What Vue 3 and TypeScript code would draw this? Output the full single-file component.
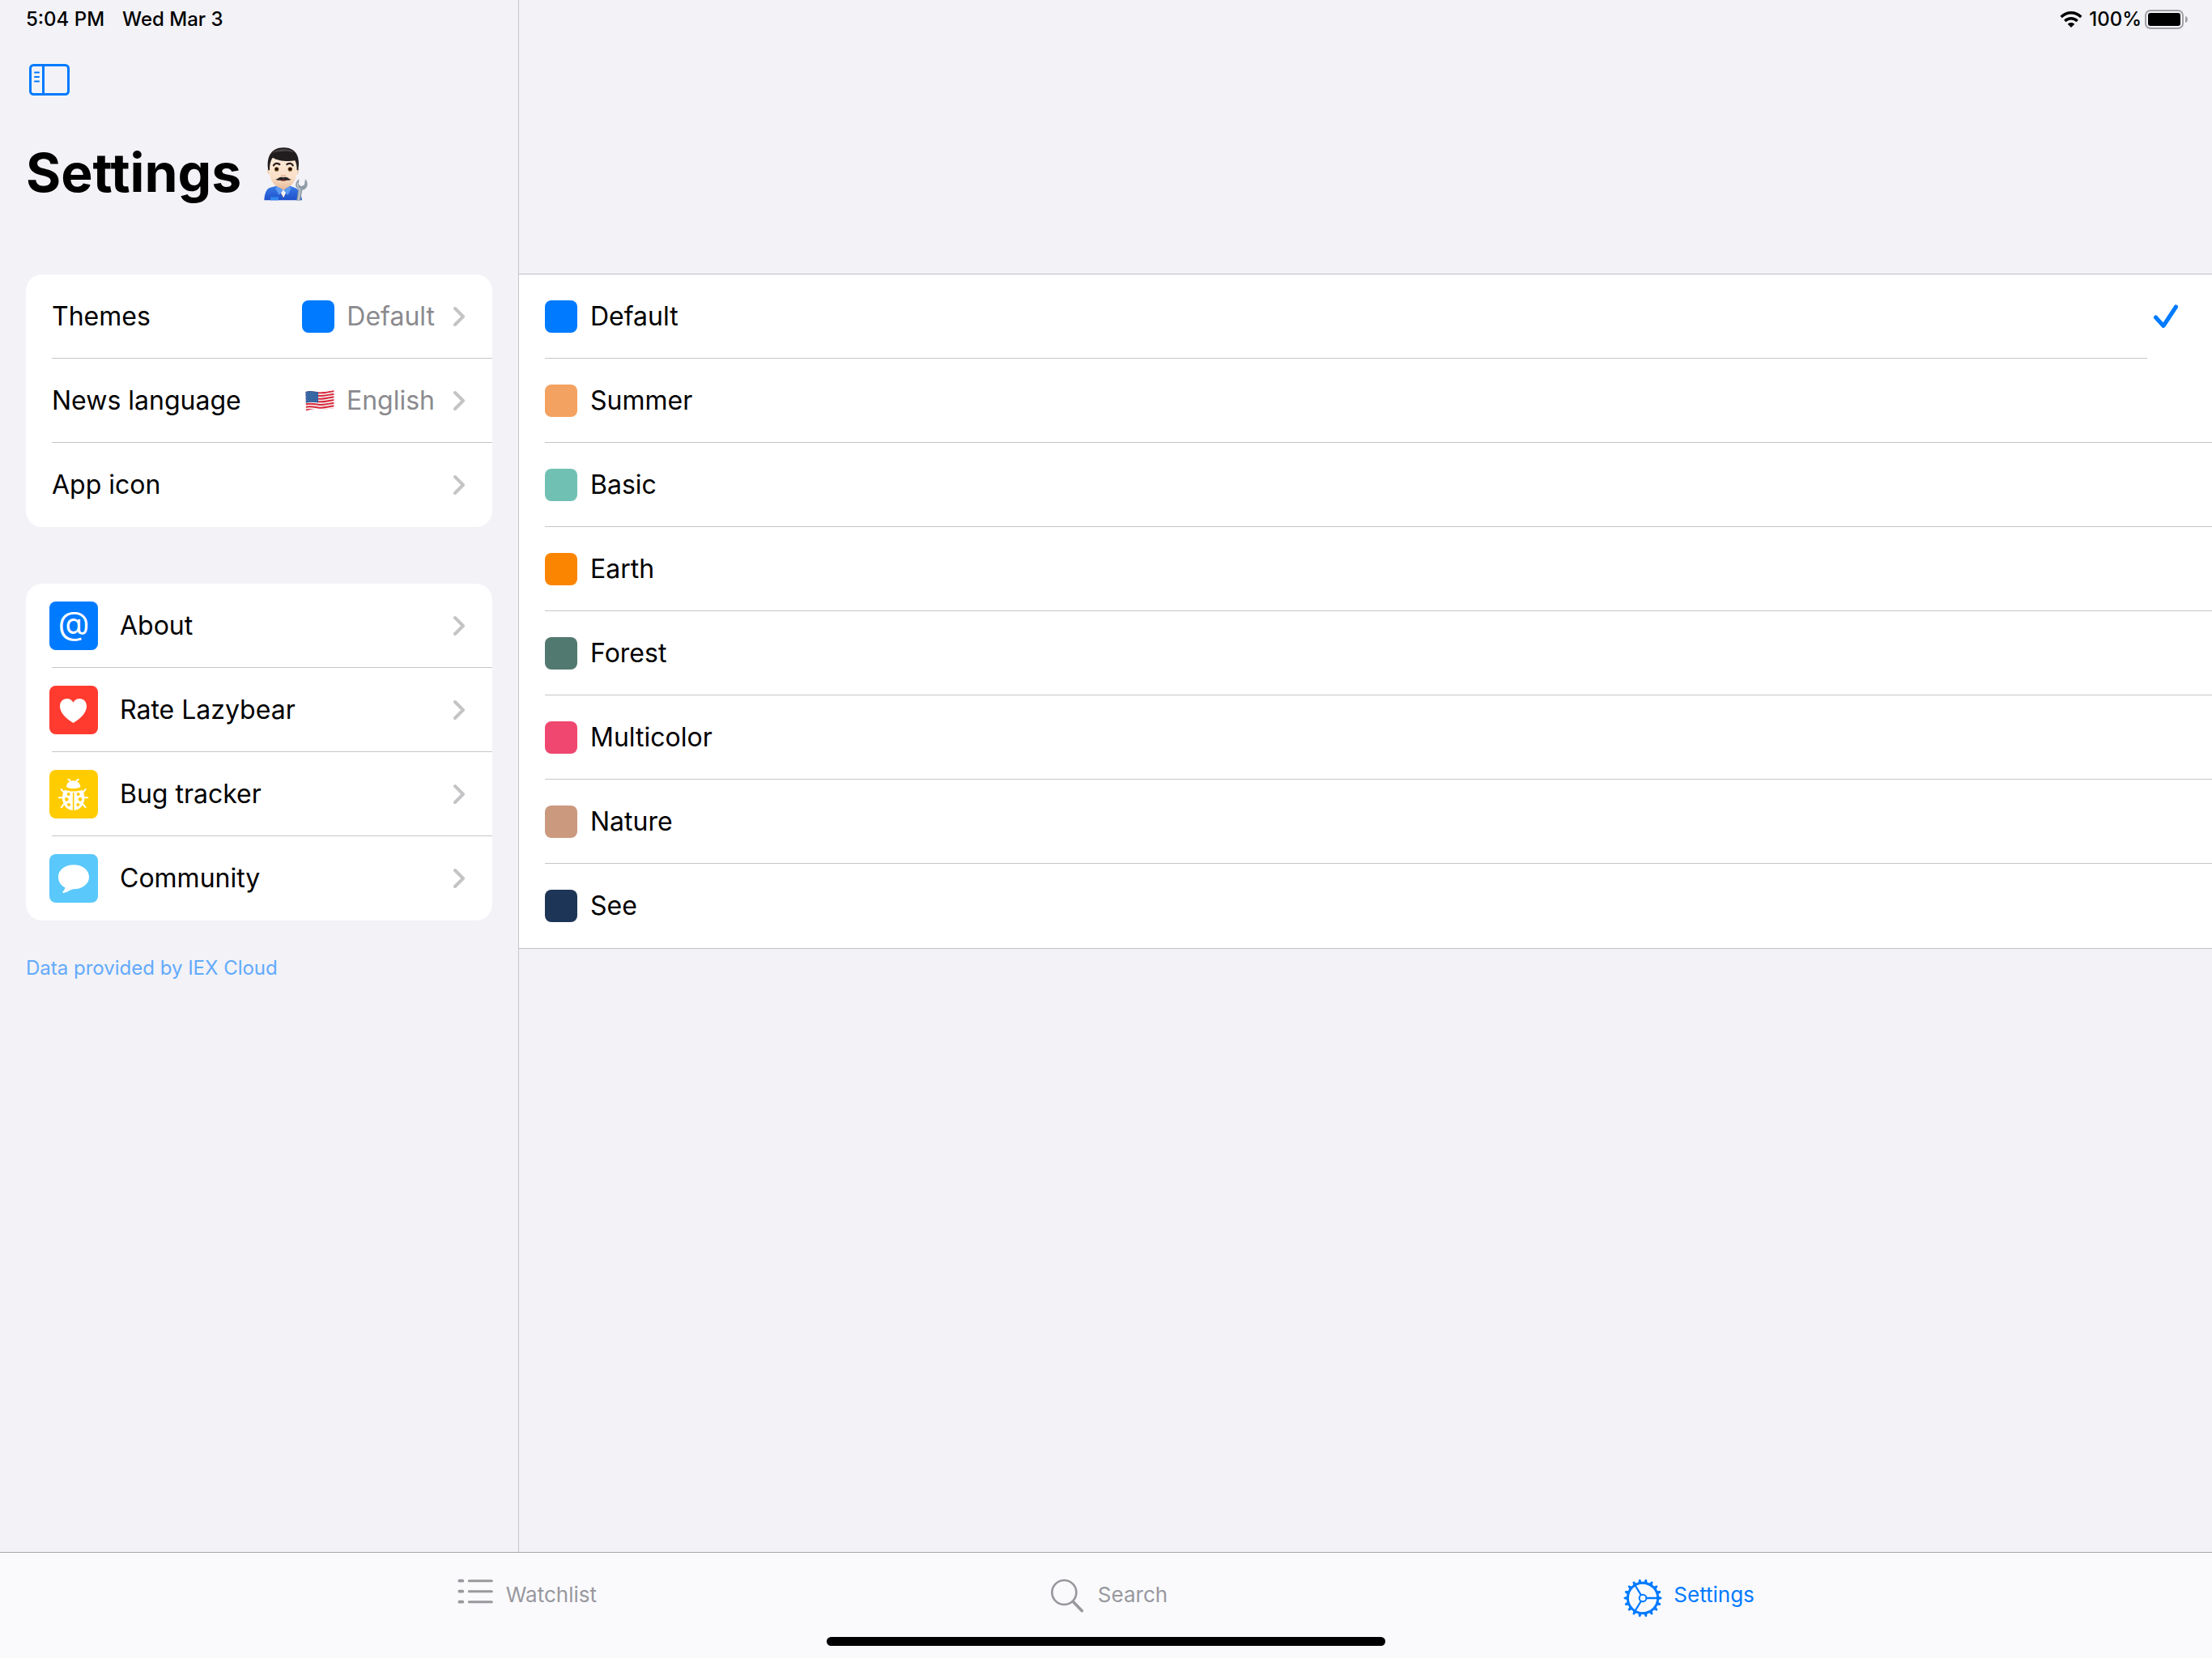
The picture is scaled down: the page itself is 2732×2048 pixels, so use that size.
<script setup lang="ts">
import { ref } from 'vue'

interface Theme {
  name: string
  color: string
}

interface LinkRow {
  label: string
  color: string
  icon: 'at' | 'heart' | 'bug' | 'bubble'
}

const themes: Theme[] = [
  { name: 'Default', color: '#007aff' },
  { name: 'Summer', color: '#f4a261' },
  { name: 'Basic', color: '#70c1b3' },
  { name: 'Earth', color: '#fb8500' },
  { name: 'Forest', color: '#52796f' },
  { name: 'Multicolor', color: '#ef476f' },
  { name: 'Nature', color: '#cb997e' },
  { name: 'See', color: '#1d3557' },
]

const links: LinkRow[] = [
  { label: 'About', color: '#007aff', icon: 'at' },
  { label: 'Rate Lazybear', color: '#ff3b30', icon: 'heart' },
  { label: 'Bug tracker', color: '#ffcc00', icon: 'bug' },
  { label: 'Community', color: '#5ac8fa', icon: 'bubble' },
]

const selected = ref('Default')
const gearTeeth = Array.from({ length: 18 }, (_, i) => i * 20)
</script>

<template>
  <div class="app">
    <div class="split">
      <aside class="sidebar">
        <div class="status">
          <span>5:04 PM</span>
          <span>Wed Mar 3</span>
        </div>

        <div class="toolbar">
          <button class="toggle" type="button" aria-label="Toggle sidebar">
            <svg width="50" height="40" viewBox="0 0 50 40" fill="none" stroke="#007aff">
              <rect x="1.5" y="1.5" width="47" height="36" rx="4" stroke-width="3" />
              <path d="M17.5 2v35" stroke-width="3" />
              <path d="M7 10.500h5M7 16h5M7 21.500h5" stroke-width="2" stroke-linecap="round" />
            </svg>
          </button>
        </div>

        <h1 class="title">
          Settings
          <svg class="mechanic" width="54" height="66" viewBox="80 65 162 198" role="img" aria-label="Mechanic">
            <defs>
              <linearGradient id="skin" x1="0" y1="0" x2="0" y2="1">
                <stop offset="0" stop-color="#fdeedd" />
                <stop offset="0.7" stop-color="#fae0c8" />
                <stop offset="1" stop-color="#e9bd9c" />
              </linearGradient>
              <linearGradient id="shirt" x1="0" y1="0" x2="0" y2="1">
                <stop offset="0" stop-color="#3a7de8" />
                <stop offset="1" stop-color="#1d4fcb" />
              </linearGradient>
            </defs>
            <path d="M81 261c1-24 7-42 22-47l28-7h42l22 8c13 5 23 20 26 46z" fill="url(#shirt)" />
            <path d="M133 200h36v18l-17 34-19-34z" fill="#e3b18e" />
            <path d="M136 218l15 6 17-6-15 32z" fill="#f2f5f8" />
            <path d="M131 208l-9 9 14 25 15-18zM172 208l9 9-13 25-15-18z" fill="#5b9bf2" />
            <path d="M104 249h30v12h-30z" fill="#3187ee" />
            <path d="M96 143c-5 4-3 20 4 24zM206 143c5 4 3 20-4 24z" fill="#efc7a4" />
            <path d="M97 125c0-28 20-46 54-46s54 18 54 46c0 40-8 88-54 92-46-4-54-52-54-92z" fill="url(#skin)" />
            <path d="M96 150c-8-46 8-84 57-84 48 0 62 36 54 84l-5 0c0-16-2-26-7-36-30 4-65 1-82-11-9 10-12 28-12 47z" fill="#211d1e" />
            <path d="M110 86c15-17 65-20 83-2-20-7-58-6-83 2z" fill="#4b4647" />
            <path d="M116 132c4-9 14-9 22-4M187 132c-4-9-14-9-22-4" fill="none" stroke="#2c2020" stroke-width="7" stroke-linecap="round" />
            <ellipse cx="127" cy="146" rx="10" ry="10" fill="#fff" />
            <ellipse cx="177" cy="146" rx="10" ry="10" fill="#fff" />
            <circle cx="127" cy="146" r="8.500" fill="#7c4a10" />
            <circle cx="177" cy="146" r="8.500" fill="#7c4a10" />
            <circle cx="127" cy="145" r="5" fill="#120a06" />
            <circle cx="177" cy="145" r="5" fill="#120a06" />
            <path d="M144 168q8 6 16 0" fill="none" stroke="#dba27e" stroke-width="4" />
            <path d="M138 184h28q-4 6-14 6t-14-6z" fill="#7a2f24" />
            <path d="M123 184c7-1 12-9 22-9 4 0 5 2 7 2s3-2 7-2c10 0 15 8 22 9-7 4-20 4-29 0-9 4-22 4-29 0z" fill="#2a2325" />
            <path d="M201 262l6-42c-9-5-13-17-6-28l9-10-1 20 9 8 12-6 3-21c10 9 11 27 1 35-4 4-8 5-12 5l-7 39z" fill="#8f9ba5" />
            <path d="M208 262l6-42c-8-4-12-14-8-24" fill="none" stroke="#c8d2d8" stroke-width="4" />
          </svg>
        </h1>

        <nav class="card" aria-label="Preferences">
          <button class="row" type="button">
            <span class="label">Themes</span>
            <span class="value">
              <span class="swatch swatch-current"></span>
              Default
            </span>
            <svg class="chevron" width="14" height="26" viewBox="0 0 14 26"><path d="M2 3l10 10L2 23" /></svg>
          </button>
          <button class="row" type="button">
            <span class="label">News language</span>
            <span class="value">
              <svg class="flag" width="36" height="26" viewBox="0 0 108 78" role="img" aria-label="United States">
                <defs>
                  <clipPath id="wave">
                    <path d="M1 6C20 0 38 6 54 7S88 2 107 0v66c-19 3-34 6-53 4S20 70 3 77z" />
                  </clipPath>
                </defs>
                <g clip-path="url(#wave)">
                  <path d="M0 0h108v78H0z" fill="#f6f3f4" />
                  <g fill="none" stroke="#d8283b" stroke-width="6">
                    <path d="M0 8C20 2 38 9 54 10S88 5 108 3" />
                    <path d="M0 19C20 13 38 20 54 21S88 16 108 14" />
                    <path d="M0 30C20 24 38 31 54 32S88 27 108 25" />
                    <path d="M0 41C20 35 38 42 54 43S88 38 108 36" />
                    <path d="M0 52C20 46 38 53 54 54S88 49 108 47" />
                    <path d="M0 63C20 57 38 64 54 65S88 60 108 58" />
                    <path d="M0 74C20 68 38 75 54 76S88 71 108 69" />
                  </g>
                  <path d="M0 4C18 0 34 5 48 7v39C34 45 18 42 0 48z" fill="#2f5f9e" />
                  <g fill="none" stroke="#a9c3e0" stroke-width="2" stroke-dasharray="2 5">
                    <path d="M4 11c16-5 30-1 42 1" />
                    <path d="M7 18c16-5 28-1 40 1" />
                    <path d="M4 25c16-5 30-1 42 1" />
                    <path d="M7 32c16-5 28-1 40 1" />
                    <path d="M4 39c16-5 30-1 42 1" />
                  </g>
                </g>
              </svg>
              English
            </span>
            <svg class="chevron" width="14" height="26" viewBox="0 0 14 26"><path d="M2 3l10 10L2 23" /></svg>
          </button>
          <button class="row" type="button">
            <span class="label">App icon</span>
            <svg class="chevron" width="14" height="26" viewBox="0 0 14 26"><path d="M2 3l10 10L2 23" /></svg>
          </button>
        </nav>

        <nav class="card" aria-label="More">
          <a v-for="link in links" :key="link.label" class="row row-icon" href="#">
            <span class="tile" :style="{ background: link.color }">
              <span v-if="link.icon === 'at'" class="at" aria-hidden="true">@</span>
              <svg v-else-if="link.icon === 'heart'" width="60" height="60" viewBox="0 0 180 180" fill="#fff">
                <path d="M88.500 138C60 121 39 100 39 76c0-17 11-28 26-28 11 0 19 5 23.500 14C93 53 101 48 112 48c15 0 26 11 26 28 0 24-21 45-49.500 62z" />
              </svg>
              <svg v-else-if="link.icon === 'bug'" width="60" height="60" viewBox="0 0 180 180">
                <g fill="none" stroke="#fff" stroke-width="6" stroke-linecap="round">
                  <path d="M79 45l-4-8-5-1M99 45l4-8 5-1" />
                  <path d="M53 82l-9-10M125 82l9-10M50 103H36M128 103h14M53 128l-9 11M125 128l9 11" />
                </g>
                <path d="M63 64c0-13 10-24 26-24s26 11 26 24c-14 7-38 7-52 0z" fill="#fff" />
                <path d="M57 74c18 7 46 7 64 0 7 9 9 18 9 29 0 26-16 47-41 47s-41-21-41-47c0-11 2-20 9-29z" fill="#fff" />
                <path d="M89 84v66" stroke="#ffcc00" stroke-width="5" />
                <g fill="#ffcc00">
                  <circle cx="71" cy="90" r="6" />
                  <circle cx="107" cy="90" r="6" />
                  <circle cx="64" cy="109" r="7" />
                  <circle cx="114" cy="109" r="7" />
                  <circle cx="72" cy="129" r="6" />
                  <circle cx="106" cy="129" r="6" />
                </g>
              </svg>
              <svg v-else width="60" height="60" viewBox="0 0 180 180" fill="#fff">
                <path d="M90 40c33 0 57 19 57 45s-24 45-58 45c-9 0-20 12-37 14-5 0-4-4-1-6 4-4 7-9 7-14-16-8-25-22-25-39 0-26 24-45 57-45z" />
              </svg>
            </span>
            <span class="label">{{ link.label }}</span>
            <svg class="chevron" width="14" height="26" viewBox="0 0 14 26"><path d="M2 3l10 10L2 23" /></svg>
          </a>
        </nav>

        <a class="credit" href="#">Data provided by IEX Cloud</a>
      </aside>

      <main class="pane">
        <div class="status status-right">
          <svg width="28" height="21" viewBox="0 0 84 63" fill="none" stroke="#000">
            <path d="M5 21C26 0 58 0 79 21" stroke-width="10" />
            <path d="M19 36C32 23 52 23 65 36" stroke-width="10" />
            <path d="M42 60L29 47c7-7 19-7 26 0z" fill="#000" stroke="none" />
          </svg>
          <span class="percent">100%</span>
          <svg width="54" height="24" viewBox="0 0 54 24">
            <rect x="1" y="1" width="46" height="22" rx="6" fill="none" stroke="#a0a0a5" stroke-width="2" />
            <rect x="4" y="4" width="40" height="16" rx="3" />
            <path d="M50 8c4 1 4 7 0 8z" fill="#a0a0a5" />
          </svg>
        </div>

        <fieldset class="themes" aria-label="Theme">
          <label v-for="theme in themes" :key="theme.name" class="theme">
            <input v-model="selected" class="radio" type="radio" name="theme" :value="theme.name" />
            <span class="theme-body">
              <span class="swatch" :style="{ background: theme.color }"></span>
              {{ theme.name }}
            </span>
            <span v-if="selected === theme.name" class="check">
              <svg width="30" height="30" viewBox="0 0 30 30" fill="none" stroke="#007aff" stroke-width="5" stroke-linecap="round" stroke-linejoin="round">
                <path d="M2.500 16L12 26.500 27.500 3" />
              </svg>
            </span>
          </label>
        </fieldset>
      </main>
    </div>

    <footer class="tabbar">
      <nav class="tabs" aria-label="Tabs">
        <button class="tab" type="button">
          <svg class="tab-icon" width="48" height="48" viewBox="0 0 144 144" fill="none" stroke="#98989d" stroke-linecap="round">
            <path d="M13 8h12M13 47h12M13 86h12" stroke-width="11" />
            <path d="M49 8h84M49 47h84M49 86h84" stroke-width="9" />
          </svg>
          Watchlist
        </button>
        <button class="tab" type="button">
          <svg class="tab-icon" width="48" height="48" viewBox="0 0 144 144" fill="none" stroke="#98989d" stroke-linecap="round">
            <circle cx="61" cy="51" r="45" stroke-width="8" />
            <path d="M95 86l32 33" stroke-width="11" />
          </svg>
          Search
        </button>
        <button class="tab tab-active" type="button" aria-current="page">
          <svg class="tab-icon" width="48" height="48" viewBox="0 0 144 144" fill="none" stroke="#007aff">
            <circle cx="72" cy="72" r="56" stroke-width="9" />
            <circle cx="72" cy="72" r="13" stroke-width="6" />
            <path d="M86 72h42M65 60L43 24M65 84l-22 36" stroke-width="7" />
            <path v-for="angle in gearTeeth" :key="angle" d="M129 65l13 4v6l-13 4z" fill="#007aff" stroke="none" :transform="`rotate(${angle} 72 72)`" />
          </svg>
          Settings
        </button>
      </nav>
      <div class="home"></div>
    </footer>
  </div>
</template>

<style>
body {
  margin: 0;
  background: #f2f2f7;
}
</style>

<style scoped>
.app {
  display: flex;
  flex-direction: column;
  min-height: 100vh;
  background: #f2f2f7;
  color: #000;
  font-family: Inter, "Liberation Sans", sans-serif;
  font-size: 32px;
  line-height: 40px;
}

.app * {
  box-sizing: border-box;
}

button {
  padding: 0;
  border: 0;
  background: none;
  color: inherit;
  font: inherit;
  text-align: left;
}

a {
  color: inherit;
  text-decoration: none;
}

svg {
  display: block;
  flex: none;
}

.split {
  display: flex;
  flex: 1;
}

.sidebar {
  flex: 0 0 641px;
  padding: 0 32px;
  border-right: 1px solid #c6c6c8;
}

.status {
  display: flex;
  align-items: center;
  gap: 22px;
  height: 48px;
  font-size: 24px;
  font-weight: 500;
  line-height: 28px;
}

.status-right {
  justify-content: flex-end;
  gap: 4px;
  padding-right: 29px;
}

.percent {
  padding-left: 4px;
}

.toolbar {
  display: flex;
  align-items: center;
  height: 102px;
  padding-left: 4px;
}

.title {
  display: flex;
  align-items: center;
  gap: 28px;
  height: 126px;
  margin: 0 0 63px;
  font-size: 66px;
  font-weight: 700;
  line-height: 80px;
}

.mechanic {
  margin-top: 4px;
}

.card {
  margin-bottom: 70px;
  border-radius: 20px;
  background: #fff;
  overflow: hidden;
}

.row {
  position: relative;
  display: flex;
  align-items: center;
  width: 100%;
  height: 104px;
  padding: 0 34px 0 32px;
}

.row-icon {
  padding-left: 29px;
}

.row:not(:last-child)::after {
  content: "";
  position: absolute;
  right: 0;
  bottom: 0;
  left: 32px;
  height: 1px;
  background: #c6c6c8;
}

.label {
  flex: 1;
}

.value {
  display: flex;
  align-items: center;
  gap: 15px;
  color: #8a8a8e;
}

.swatch {
  flex: none;
  width: 40px;
  height: 40px;
  border-radius: 8px;
}

.swatch-current {
  background: #007aff;
}

.chevron {
  margin-left: 23px;
  fill: none;
  stroke: #c4c4c6;
  stroke-width: 4;
  stroke-linecap: round;
  stroke-linejoin: round;
}

.tile {
  display: flex;
  align-items: center;
  justify-content: center;
  width: 60px;
  height: 60px;
  margin-right: 27px;
  border-radius: 8px;
  color: #fff;
}

.at {
  padding-bottom: 6px;
  font-size: 40px;
  line-height: 40px;
}

.credit {
  display: block;
  margin-top: -26px;
  color: #62aafc;
  font-size: 24px;
  line-height: 30px;
}

.pane {
  flex: 1;
  min-width: 0;
}

.themes {
  margin: 290px 0 0;
  padding: 0;
  border: 0;
  border-top: 1px solid #c0c0c5;
  border-bottom: 1px solid #c0c0c5;
  background: #fff;
}

.theme {
  position: relative;
  display: flex;
  height: 104px;
  padding-left: 32px;
}

.radio {
  position: absolute;
  margin: 0;
  opacity: 0;
}

.theme-body {
  display: flex;
  flex: 1;
  align-items: center;
  gap: 16px;
  border-bottom: 1px solid #c6c6c8;
}

.theme:last-child .theme-body {
  border-bottom: 0;
}

.check {
  display: flex;
  align-items: center;
  width: 80px;
  padding-left: 8px;
}

.tabbar {
  display: flex;
  flex-direction: column;
  align-items: center;
  height: 131px;
  padding-bottom: 15px;
  border-top: 1px solid #a9a9ad;
  background: #fafafd;
}

.tabs {
  display: grid;
  grid-template-columns: repeat(3, 1fr);
  width: 79%;
  padding-left: 4px;
}

.tab {
  display: flex;
  align-items: center;
  justify-content: center;
  gap: 14px;
  height: 104px;
  color: #98989d;
  font-size: 26px;
  line-height: 32px;
}

.tab-active {
  color: #007aff;
}

.tab-icon {
  margin-top: 8px;
}

.home {
  width: 690px;
  height: 11px;
  border-radius: 6px;
  background: #000;
}
</style>
